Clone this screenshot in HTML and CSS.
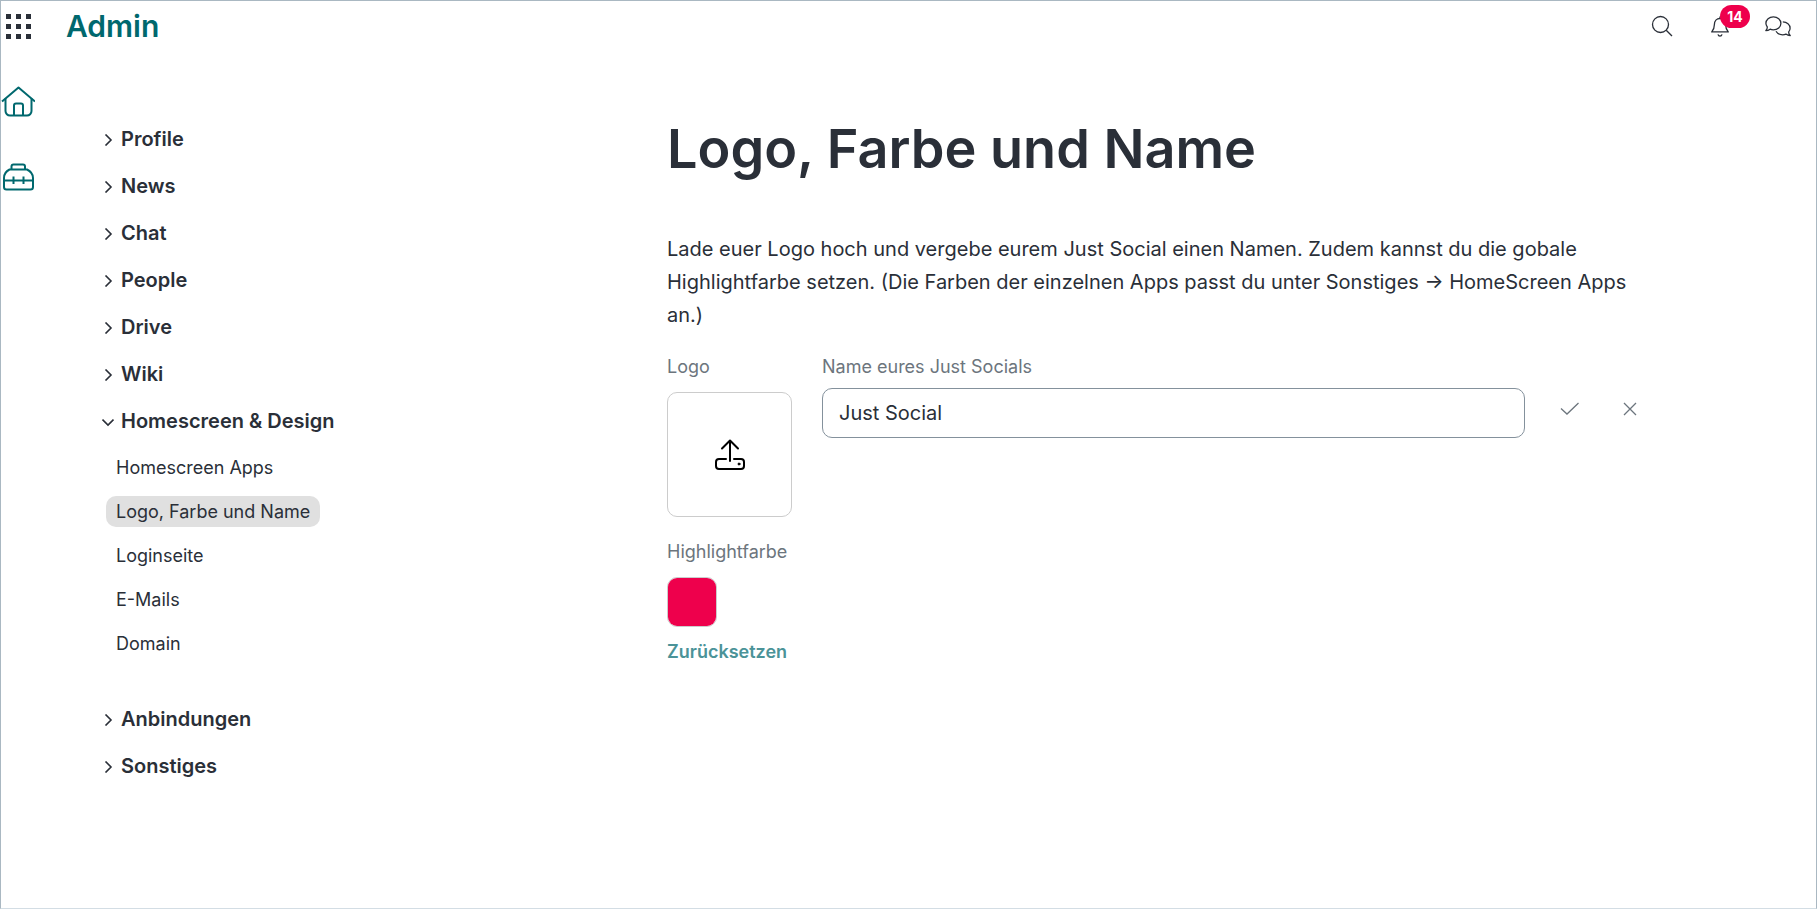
FILE: index.html
```html
<!DOCTYPE html>
<html lang="de">
  <head>
    <meta charset="utf-8">
    <title>Admin - Logo, Farbe und Name</title>
    <link rel="stylesheet" href="styles.css">
  </head>
  <body>
    <svg width="0" height="0" class="symbols">
      <symbol id="chevron" viewBox="0 0 12 12">
        <path d="M3.500.500L9 6l-5.500 5.500" fill="none" stroke="currentColor" stroke-width="1.600"/>
      </symbol>
    </svg>

    <header class="topbar">
      <button type="button" class="icon-button apps-button" aria-label="Apps">
        <svg width="25" height="25" viewBox="0 0 25 25" fill="currentColor">
          <path d="M0 0h5v5H0zM10 0h5v5h-5zM20 0h5v5h-5zM0 10h5v5H0zM10 10h5v5h-5zM20 10h5v5h-5zM0 20h5v5H0zM10 20h5v5h-5zM20 20h5v5h-5z"/>
        </svg>
      </button>
      <a href="#" class="brand">Admin</a>
      <div class="topbar-actions">
        <button type="button" class="icon-button" aria-label="Suche">
          <svg width="26" height="26" viewBox="0 0 26 26" fill="none" stroke="currentColor" stroke-width="1.3">
            <circle cx="11.5" cy="11.5" r="8"/>
            <path d="M17.2 17.2l5.8 5.8"/>
          </svg>
        </button>
        <button type="button" class="icon-button" aria-label="Benachrichtigungen">
          <svg width="26" height="26" viewBox="0 0 26 26" fill="none" stroke="currentColor" stroke-width="1.3">
            <path d="M4.7 18.9c1.500-1.700 2.700-3 2.700-7.400 0-3.500 2.200-6 5.600-6s5.600 2.500 5.600 6c0 4.400 1.200 5.700 2.700 7.400z" stroke-linejoin="round"/>
            <path d="M13 5.500V3.500M11 21.300c.3 1.300 1 1.700 2 1.700s1.700-.4 2-1.700"/>
          </svg>
          <span class="badge">14</span>
        </button>
        <button type="button" class="icon-button" aria-label="Chat">
          <svg width="26" height="26" viewBox="0 0 26 26" fill="none" stroke="currentColor" stroke-width="1.300" stroke-linejoin="round">
            <path d="M.8 17.600c1.200-1.300 1.600-2.300 1.500-3.600A6.300 6.300 0 0 1 .9 10.300c0-3.700 3.300-6.500 7.500-6.500s7.500 2.800 7.500 6.500-3.300 6.600-7.500 6.600c-1.200 0-2.300-.2-3.300-.7-1.200.9-2.600 1.400-4.300 1.400z"/>
            <path d="M17.800 8.900c4.100 0 7.300 2.700 7.300 6.300 0 1.400-.5 2.700-1.400 3.700-.1 1.300.3 2.300 1.500 3.600-1.700 0-3.100-.5-4.300-1.400-1 .5-2.100.7-3.300.7-2.900 0-5.400-1.400-6.600-3.500"/>
          </svg>
        </button>
      </div>
    </header>

    <div class="layout">
      <aside class="rail">
        <a href="#" aria-label="Home">
          <svg width="34" height="32" viewBox="0 0 34 32" fill="none" stroke="currentColor" stroke-width="2" stroke-linejoin="round">
            <path d="M1 15.500L17.500 1.500 34 15.500"/>
            <path d="M4.500 12.500V25a4.500 4.500 0 0 0 4.500 4.500h17a4.500 4.500 0 0 0 4.500-4.500V12.500"/>
            <path d="M13 29.500v-10a2 2 0 0 1 2-2h5a2 2 0 0 1 2 2v10"/>
          </svg>
        </a>
        <a href="#" aria-label="Werkzeuge">
          <svg width="34" height="30" viewBox="0 0 34 30" fill="none" stroke="currentColor" stroke-width="2" stroke-linejoin="round">
            <path d="M10.500 7.500V4.500a2 2 0 0 1 2-2h9.500a2 2 0 0 1 2 2v3"/>
            <path d="M8.500 7.500h17.500c4 2 6 4.500 6 8.500v9a2.500 2.500 0 0 1-2.500 2.500h-24A2.500 2.500 0 0 1 3 25v-9c0-4 1.500-6.500 5.500-8.500z"/>
            <path d="M3 18.500h29M12.500 14.500v7.500M22.500 14.500v7.500"/>
          </svg>
        </a>
      </aside>

      <nav class="sidebar">
        <details class="nav-group">
          <summary><svg class="chevron"><use href="#chevron"/></svg>Profile</summary>
        </details>
        <details class="nav-group">
          <summary><svg class="chevron"><use href="#chevron"/></svg>News</summary>
        </details>
        <details class="nav-group">
          <summary><svg class="chevron"><use href="#chevron"/></svg>Chat</summary>
        </details>
        <details class="nav-group">
          <summary><svg class="chevron"><use href="#chevron"/></svg>People</summary>
        </details>
        <details class="nav-group">
          <summary><svg class="chevron"><use href="#chevron"/></svg>Drive</summary>
        </details>
        <details class="nav-group">
          <summary><svg class="chevron"><use href="#chevron"/></svg>Wiki</summary>
        </details>
        <details class="nav-group" open>
          <summary><svg class="chevron"><use href="#chevron"/></svg>Homescreen &amp; Design</summary>
          <ul class="nav-list">
            <li><a href="#">Homescreen Apps</a></li>
            <li><a href="#" class="active">Logo, Farbe und Name</a></li>
            <li><a href="#">Loginseite</a></li>
            <li><a href="#">E-Mails</a></li>
            <li><a href="#">Domain</a></li>
          </ul>
        </details>
        <details class="nav-group">
          <summary><svg class="chevron"><use href="#chevron"/></svg>Anbindungen</summary>
        </details>
        <details class="nav-group">
          <summary><svg class="chevron"><use href="#chevron"/></svg>Sonstiges</summary>
        </details>
      </nav>

      <main class="content">
        <h1>Logo, Farbe und Name</h1>
        <p class="intro">Lade euer Logo hoch und vergebe eurem Just Social einen Namen. Zudem kannst du die gobale Highlightfarbe setzen. (Die Farben der einzelnen Apps passt du unter Sonstiges → HomeScreen Apps an.)</p>

        <form class="form-row">
          <div class="logo-field">
            <label for="logo">Logo</label>
            <button type="button" id="logo" class="upload-button" aria-label="Logo hochladen">
              <svg width="32" height="32" viewBox="0 0 32 32" fill="none" stroke="currentColor" stroke-width="2" stroke-linecap="round" stroke-linejoin="round">
                <path d="M16 22V2M8 9.500l8-8 8 8"/>
                <path d="M12 20H5a3 3 0 0 0-3 3v4a3 3 0 0 0 3 3h22a3 3 0 0 0 3-3v-4a3 3 0 0 0-3-3h-7"/>
                <circle cx="25" cy="25" r="1" fill="currentColor" stroke-width="1"/>
              </svg>
            </button>
          </div>
          <div class="name-field">
            <label for="name">Name eures Just Socials</label>
            <input type="text" id="name" name="name" value="Just Social">
          </div>
          <div class="form-actions">
            <button type="submit" class="icon-button" aria-label="Speichern">
              <svg width="20" height="20" viewBox="0 0 20 20" fill="none" stroke="currentColor" stroke-width="1.300">
                <path d="M1 9.500l6 5.500L18.500 4"/>
              </svg>
            </button>
            <button type="reset" class="icon-button" aria-label="Abbrechen">
              <svg width="20" height="20" viewBox="0 0 20 20" fill="none" stroke="currentColor" stroke-width="1.300">
                <path d="M4 4l12 12M16 4L4 16"/>
              </svg>
            </button>
          </div>
        </form>

        <div class="color-field">
          <label for="color">Highlightfarbe</label>
          <input type="color" id="color" value="#ee004c">
          <button type="button" class="reset-button">Zurücksetzen</button>
        </div>
      </main>
    </div>
  </body>
</html>
```

FILE: styles.css
```css
* {
  box-sizing: border-box;
}

body {
  margin: 0;
  min-height: 100vh;
  border: 1px solid #aab8c2;
  border-bottom-color: #d3dde4;
  background-color: #fff;
  color: #2a2f38;
  font-family: Inter, "Liberation Sans", sans-serif;
  font-size: 20px;
}

a {
  color: inherit;
  text-decoration: none;
}

button {
  padding: 0;
  border: none;
  background: none;
  color: inherit;
  font-family: inherit;
  cursor: pointer;
}

svg {
  display: block;
}

/* top bar */
.topbar {
  display: flex;
  align-items: center;
  height: 50px;
  padding: 0 25px 0 5px;
}

.brand {
  margin-left: 35px;
  color: #00686e;
  font-size: 30px;
  font-weight: 600;
}

.topbar-actions {
  display: flex;
  gap: 32px;
  margin-left: auto;
}

.icon-button {
  position: relative;
}

.badge {
  position: absolute;
  top: -8px;
  left: 13px;
  width: 30px;
  border-radius: 12px;
  background-color: #ee004c;
  color: #fff;
  font-size: 14px;
  font-weight: 700;
  line-height: 23px;
  text-align: center;
}

.layout {
  display: flex;
}

/* icon rail on the left */
.rail {
  display: flex;
  flex-direction: column;
  gap: 44px;
  width: 101px;
  padding-top: 35px;
  color: #00686e;
}

/* navigation */
.sidebar {
  width: 565px;
  padding-top: 65px;
}

.nav-group summary {
  display: flex;
  align-items: center;
  gap: 7px;
  line-height: 47px;
  font-weight: 600;
  list-style: none;
  cursor: pointer;
}

.chevron {
  width: 12px;
  height: 12px;
}

.nav-group[open] .chevron {
  transform: rotate(90deg);
}

.nav-list {
  display: flex;
  flex-direction: column;
  align-items: flex-start;
  gap: 13px;
  margin: 0;
  padding: 7px 0 37px 4px;
  list-style: none;
  font-size: 18px;
  line-height: 31px;
}

.nav-list a {
  display: block;
  padding: 0 10px;
  border-radius: 10px;
}

.nav-list .active {
  background-color: #e0e0e0;
}

/* content */
.content {
  flex: 1;
  padding: 64px 166px 0 0;
}

h1 {
  margin: 0 0 50px;
  font-size: 54px;
  font-weight: 600;
  line-height: 68px;
}

.intro {
  margin: 0 0 21px;
  line-height: 33px;
}

label {
  display: block;
  color: #6c757d;
  font-size: 18px;
  line-height: 28px;
}

.form-row {
  display: flex;
  gap: 30px;
}

.upload-button {
  display: flex;
  align-items: center;
  justify-content: center;
  width: 125px;
  height: 125px;
  margin-top: 11px;
  border: 1px solid #ccc;
  border-radius: 10px;
  color: #000;
}

.name-field {
  flex: 1;
}

.name-field input {
  width: 100%;
  height: 50px;
  margin-top: 7px;
  padding: 0 16px;
  border: 1px solid #84919c;
  border-radius: 10px;
  color: inherit;
  font-family: inherit;
  font-size: 20px;
}

.form-actions {
  display: flex;
  align-items: flex-start;
  gap: 40px;
  padding: 46px 10px 0 5px;
  color: #6c757d;
}

.color-field {
  display: flex;
  flex-direction: column;
  align-items: flex-start;
  margin-top: 21px;
}

.color-field input {
  width: 50px;
  height: 50px;
  margin: 11px 0;
  padding: 0;
  border: 1px solid #ccc;
  border-radius: 10px;
  background: none;
  overflow: hidden;
  cursor: pointer;
}

.color-field input::-webkit-color-swatch-wrapper {
  padding: 0;
}

.color-field input::-webkit-color-swatch {
  border: none;
}

.reset-button {
  color: #4b9398;
  font-size: 18px;
  font-weight: 600;
  line-height: 28px;
}
```
